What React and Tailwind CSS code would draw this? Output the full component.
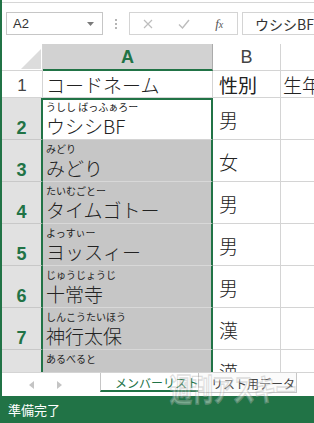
import React from "react";

const rows = [
  { n: 2, kana: "うしし ばっふぁろー", name: "ウシシBF", sex: "男" },
  { n: 3, kana: "みどり", name: "みどり", sex: "女" },
  { n: 4, kana: "たいむごとー", name: "タイムゴトー", sex: "男" },
  { n: 5, kana: "よっすぃー", name: "ヨッスィー", sex: "男" },
  { n: 6, kana: "じゅうじょうじ", name: "十常寺", sex: "男" },
  { n: 7, kana: "しんこうたいほう", name: "神行太保", sex: "漢" },
  { n: 8, kana: "あるべると", name: "", sex: "漢" },
];

function FormulaBar() {
  return (
    <div className="h-[41px] flex items-start pt-[9px] bg-white shrink-0">
      <div className="ml-[4px] w-[104px] h-[23px] border border-[#c6c6c6] flex items-center justify-between pl-[6px] pr-[8px]">
        <span className="text-[13px] text-[#333] font-['Liberation_Sans',sans-serif]">A2</span>
        <svg width="7" height="4" viewBox="0 0 7 4">
          <path d="M0 0h7L3.5 4z" fill="#7a7a7a" />
        </svg>
      </div>
      <div className="w-[28px] h-[23px] flex flex-col items-center justify-center gap-[2px]">
        <span className="w-[2px] h-[2px] bg-[#b5b5b5]" />
        <span className="w-[2px] h-[2px] bg-[#b5b5b5]" />
        <span className="w-[2px] h-[2px] bg-[#b5b5b5]" />
      </div>
      <div className="w-[109px] h-[23px] border border-[#d4d4d4] flex items-center">
        <div className="w-[36px] flex justify-center">
          <svg width="10" height="10" viewBox="0 0 10 10">
            <path d="M1 1l8 8M9 1l-8 8" stroke="#bdbdbd" strokeWidth="1.2" />
          </svg>
        </div>
        <div className="w-[36px] flex justify-center">
          <svg width="12" height="10" viewBox="0 0 12 10">
            <path d="M1 5.5l3.5 3.5L11 1" stroke="#bdbdbd" strokeWidth="1.4" fill="none" />
          </svg>
        </div>
        <div className="w-[36px] flex justify-center">
          <span className="text-[13px] italic text-[#555] font-['Liberation_Serif',serif] leading-none">
            f<span className="text-[10px]">x</span>
          </span>
        </div>
      </div>
      <div className="ml-[4px] flex-1 h-[23px] border-y border-l border-[#d4d4d4] flex items-center pl-[12px]">
        <span className="text-[14px] text-[#333] font-['Noto_Sans_CJK_JP',sans-serif] leading-none whitespace-nowrap">
          ウシシBF
        </span>
      </div>
    </div>
  );
}

function HeaderRow() {
  return (
    <div className="flex h-[27px] shrink-0">
      <div className="w-[41px] bg-white border-r border-b border-[#d4d4d4] flex items-end justify-end pr-[1px] pb-[1px]">
        <svg width="20" height="20" viewBox="0 0 20 20">
          <path d="M20 0V20H0z" fill="#dcdcdc" />
        </svg>
      </div>
      <div className="w-[170px] bg-[#d2d2d2] border-r border-[#ababab] border-b-2 border-b-[#217346] flex items-center justify-center">
        <span className="text-[18px] font-bold text-[#217346] font-['Liberation_Sans',sans-serif] leading-none">A</span>
      </div>
      <div className="w-[68px] bg-white border-r border-b border-[#d4d4d4] flex items-center justify-center">
        <span className="text-[18px] text-[#444] font-['Liberation_Sans',sans-serif] leading-none">B</span>
      </div>
      <div className="flex-1 bg-white border-b border-[#d4d4d4]" />
    </div>
  );
}

function TitleRow() {
  return (
    <div className="flex h-[27px] shrink-0">
      <div className="w-[41px] bg-white border-r border-b border-[#d4d4d4] flex items-end justify-center pb-[1px]">
        <span className="text-[17px] text-[#444] font-['Liberation_Sans',sans-serif] leading-[20px]">1</span>
      </div>
      <div className="w-[170px] border-r border-b border-[#d4d4d4] flex items-end pl-[3px]">
        <span className="text-[19px] font-light text-[#222] font-['Noto_Sans_CJK_JP',sans-serif] leading-[24px] whitespace-nowrap">
          コードネーム
        </span>
      </div>
      <div className="w-[68px] border-r border-b border-[#d4d4d4] flex items-end pl-[6px]">
        <span className="text-[19px] font-normal text-[#222] font-['Noto_Sans_CJK_JP',sans-serif] leading-[24px] whitespace-nowrap">
          性別
        </span>
      </div>
      <div className="flex-1 border-b border-[#d4d4d4] flex items-end pl-[2px] overflow-hidden">
        <span className="text-[19px] font-light text-[#222] font-['Noto_Sans_CJK_JP',sans-serif] leading-[24px] whitespace-nowrap">
          生年
        </span>
      </div>
    </div>
  );
}

function DataRow({ row }) {
  const active = row.n === 2;
  return (
    <div className="flex h-[42px] shrink-0">
      <div className="w-[41px] bg-[#e1e1e1] border-r-2 border-r-[#217346] border-b border-b-[#c8c8c8] flex items-end justify-center pb-[1px]">
        <span className="text-[18px] font-bold text-[#217346] font-['Liberation_Sans',sans-serif] leading-[20px]">
          {row.name ? row.n : ""}
        </span>
      </div>
      <div
        className={
          active
            ? "w-[170px] bg-white border-t-2 border-t-[#217346] border-r-2 border-r-[#217346] border-b border-b-[#d4d4d4] flex flex-col justify-end pl-[3px] pb-[1px]"
            : "w-[170px] bg-[#c6c6c6] border-r-2 border-r-[#217346] border-b border-b-[#d8d8d8] flex flex-col justify-end pl-[3px] pb-[1px]"
        }
      >
        <span className="text-[10px] text-[#222] font-['Noto_Sans_CJK_JP',sans-serif] leading-[12px] whitespace-nowrap">
          {row.kana}
        </span>
        <span className="h-[25px] text-[19px] font-light text-[#222] font-['Noto_Sans_CJK_JP',sans-serif] leading-[25px] whitespace-nowrap">
          {row.name}
        </span>
      </div>
      <div className="w-[68px] border-r border-b border-[#d4d4d4] flex items-center pl-[6px] pt-[3px] overflow-hidden">
        <span className="text-[19px] font-light text-[#222] font-['Noto_Sans_CJK_JP',sans-serif] leading-[24px]">
          {row.sex}
        </span>
      </div>
      <div className="flex-1 border-b border-[#d4d4d4]" />
    </div>
  );
}

function SheetTabs() {
  return (
    <div className="h-[24px] shrink-0 flex bg-white border-t border-[#d4d4d4]">
      <div className="w-[98px] flex items-center pt-[1px]">
        <svg className="ml-[27px]" width="5" height="8" viewBox="0 0 5 8">
          <path d="M5 0V8L0 4z" fill="#c4c4c4" />
        </svg>
        <svg className="ml-[23px]" width="5" height="8" viewBox="0 0 5 8">
          <path d="M0 0V8L5 4z" fill="#c4c4c4" />
        </svg>
      </div>
      <div className="w-[98px] h-[19px] border-l border-[#c6c6c6] border-b-2 border-b-[#217346] bg-white flex items-center pl-[14px] pt-[2px]">
        <span className="text-[12px] text-[#217346] font-['Noto_Sans_CJK_JP',sans-serif] leading-none whitespace-nowrap">
          メンバーリスト
        </span>
      </div>
      <div className="w-[99px] h-[20px] border-x border-b border-[#c6c6c6] bg-[#fbfbfb] flex items-center pl-[12px] pt-[2px]">
        <span className="text-[12px] text-[#444] font-['Noto_Sans_CJK_JP',sans-serif] leading-none whitespace-nowrap">
          リスト用データ
        </span>
      </div>
    </div>
  );
}

export default function App() {
  return (
    <div className="relative w-[314px] h-[423px] overflow-hidden bg-white border-l-2 border-[#217346] flex flex-col">
      <div className="h-[3px] shrink-0 border-b border-[#d6d6d6]" />
      <FormulaBar />
      <div className="h-[328px] shrink-0 overflow-hidden flex flex-col">
        <HeaderRow />
        <TitleRow />
        {rows.map((row) => (
          <DataRow key={row.n} row={row} />
        ))}
      </div>
      <SheetTabs />
      <div className="flex-1 bg-[#217346] flex items-center pl-[6px]">
        <span className="text-[13px] text-white font-['Noto_Sans_CJK_JP',sans-serif] leading-none">準備完了</span>
      </div>
      <div className="absolute left-[168px] top-[372px] pointer-events-none opacity-40">
        <span className="block text-[22px] font-bold text-white font-['Noto_Sans_CJK_JP',sans-serif] leading-none tracking-[-1px] scale-y-[1.4] origin-top whitespace-nowrap [-webkit-text-stroke:1px_#b0b0b0]">
          週刊アスキー
        </span>
      </div>
    </div>
  );
}
